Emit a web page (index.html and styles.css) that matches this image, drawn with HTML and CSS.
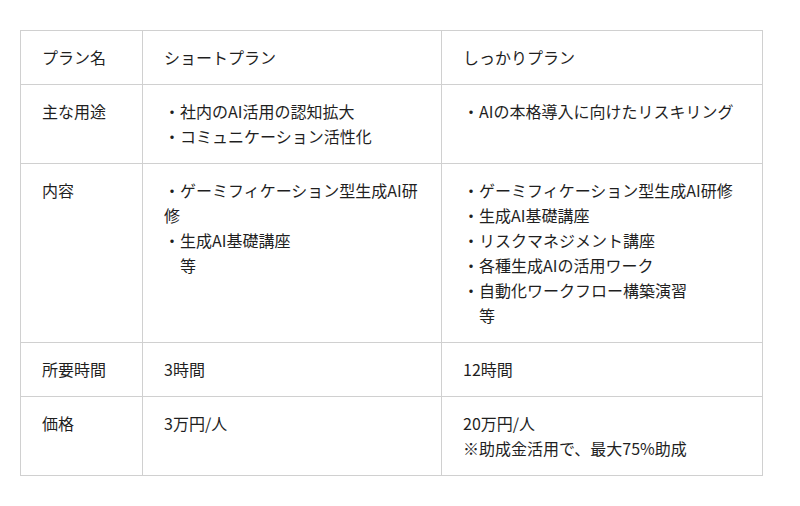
FILE: index.html
```html
<!DOCTYPE html>
<html lang="ja">
<head>
<meta charset="utf-8">
<link rel="stylesheet" href="styles.css">
</head>
<body>
<table class="plans">
  <colgroup>
    <col class="c1">
    <col class="c2">
    <col class="c3">
  </colgroup>
  <tr>
    <td>プラン名</td>
    <td>ショートプラン</td>
    <td>しっかりプラン</td>
  </tr>
  <tr>
    <td>主な用途</td>
    <td>・社内のAI活用の認知拡大<br>・コミュニケーション活性化</td>
    <td>・AIの本格導入に向けたリスキリング</td>
  </tr>
  <tr>
    <td>内容</td>
    <td>・ゲーミフィケーション型生成AI研修<br>・生成AI基礎講座<br>　等</td>
    <td>・ゲーミフィケーション型生成AI研修<br>・生成AI基礎講座<br>・リスクマネジメント講座<br>・各種生成AIの活用ワーク<br>・自動化ワークフロー構築演習<br>　等</td>
  </tr>
  <tr>
    <td>所要時間</td>
    <td>3時間</td>
    <td>12時間</td>
  </tr>
  <tr>
    <td>価格</td>
    <td>3万円/人</td>
    <td>20万円/人<br>※助成金活用で、最大75%助成</td>
  </tr>
</table>
</body>
</html>
```
FILE: styles.css
```css
html, body {
  margin: 0;
  background: #ffffff;
}
body {
  padding: 30px 0 0 20px;
  font-family: "Noto Sans CJK JP", "Noto Sans", sans-serif;
  font-size: 16px;
  line-height: 25px;
  color: #1f1f1f;
}
.plans {
  border-collapse: collapse;
  table-layout: fixed;
  width: 742px;
}
.plans .c1 { width: 122px; }
.plans .c2 { width: 299px; }
.plans .c3 { width: 321px; }
.plans td {
  border: 1px solid #d0d0d0;
  padding: 14px 21px;
  vertical-align: top;
  text-align: left;
}
```
